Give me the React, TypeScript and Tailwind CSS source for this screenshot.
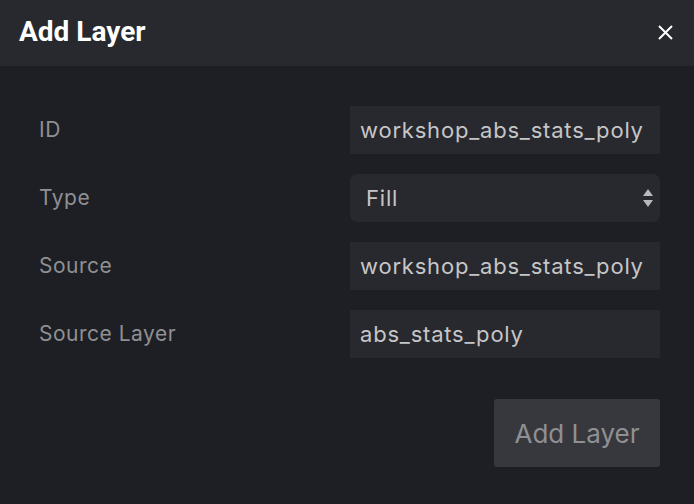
const fields = [
  { label: "ID", value: "workshop_abs_stats_poly" },
  { label: "Type", value: "Fill", select: true },
  { label: "Source", value: "workshop_abs_stats_poly" },
  { label: "Source Layer", value: "abs_stats_poly" },
];

export default function App() {
  return (
    <div className="w-[694px] h-[504px] bg-[#1d1f24] font-['Inter',sans-serif] flex flex-col">
      <div className="h-[66px] bg-[#27292e] flex items-center justify-between pl-[19px] pr-[21px]">
        <h2 className="text-[28px] leading-none font-bold text-white font-['Roboto',sans-serif] -mt-[2px]">Add Layer</h2>
        <button className="text-white -mt-[2px]">
          <svg width="15" height="15" viewBox="0 0 15 15" stroke="currentColor" strokeWidth="2">
            <path d="M1 1 L14 14 M14 1 L1 14" />
          </svg>
        </button>
      </div>

      <div className="flex flex-col gap-[20px] pt-[40px] pl-[39px] pr-[34px]">
        {fields.map((f) => (
          <div key={f.label} className="flex items-center justify-between">
            <span className="text-[21px] tracking-[0.5px] text-[#8f9093]">{f.label}</span>
            {f.select ? (
              <div className="w-[310px] h-[48px] bg-[#27292e] rounded-[7px] flex items-center justify-between pl-[16px] pr-[6px]">
                <span className="text-[22px] tracking-[0.8px] text-[#c6c6c8]">{f.value}</span>
                <svg width="12" height="22" viewBox="0 0 12 22">
                  <path d="M6 2 L11 9 L1 9 Z" fill="#b9b9bb" />
                  <path d="M1 13 L11 13 L6 20 Z" fill="#b9b9bb" />
                </svg>
              </div>
            ) : (
              <div className="w-[310px] h-[48px] bg-[#27292e] flex items-center px-[10px]">
                <span className="text-[22px] tracking-[0.8px] text-[#c6c6c8]">{f.value}</span>
              </div>
            )}
          </div>
        ))}
      </div>

      <div className="flex justify-end pr-[34px] pt-[41px]">
        <button className="w-[166px] h-[68px] bg-[#37383d] rounded-[3px] text-[26px] text-[#8f9093]">
          Add Layer
        </button>
      </div>
    </div>
  );
}
